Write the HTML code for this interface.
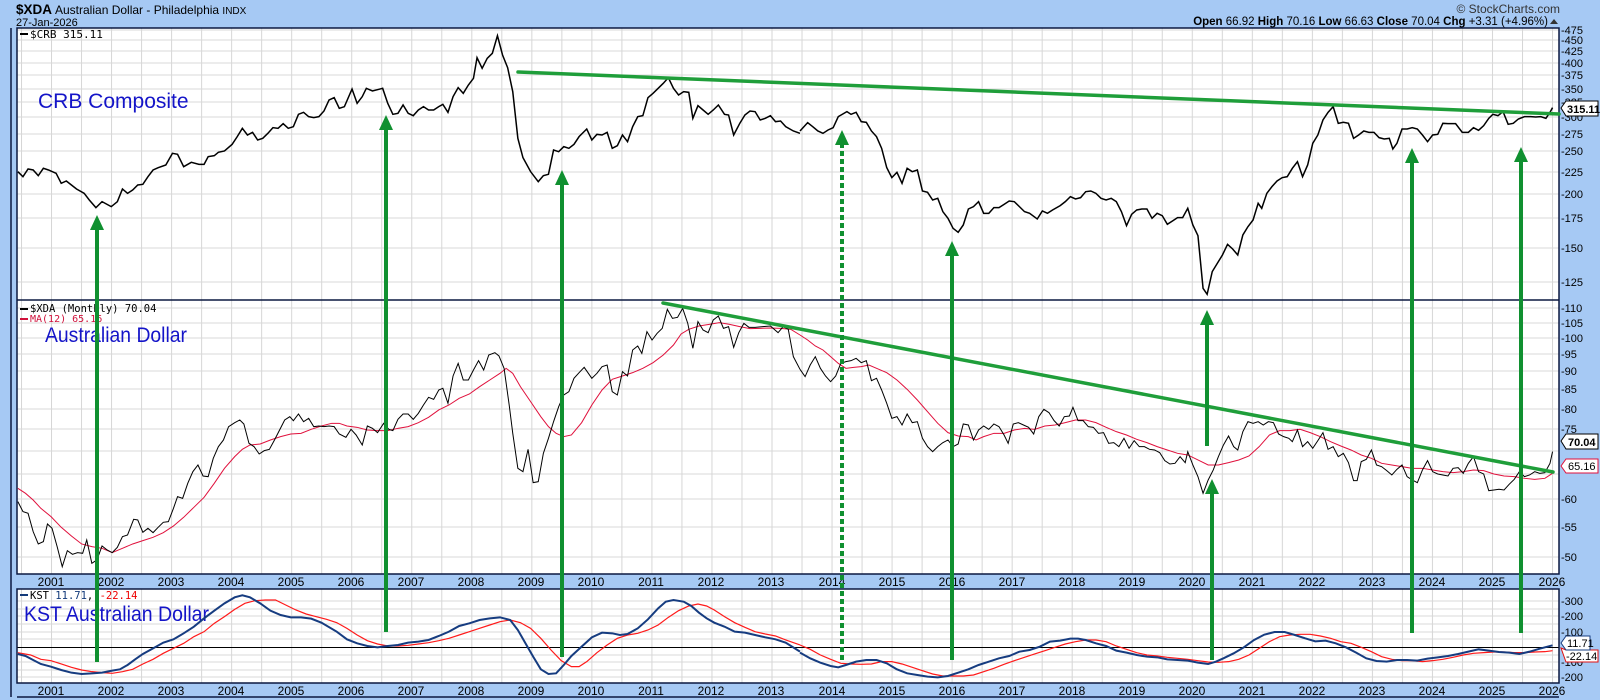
<!DOCTYPE html>
<html><head><meta charset="utf-8"><style>
html,body{margin:0;padding:0;background:#a6c9f4;}
svg{display:block;font-family:"Liberation Sans",Arial,sans-serif;}
</style></head><body>
<svg width="1600" height="700" viewBox="0 0 1600 700" xmlns="http://www.w3.org/2000/svg">
<rect width="1600" height="700" fill="#a6c9f4"/>
<text x="16" y="14" font-size="13.5" font-weight="bold" fill="#000">$XDA</text>
<text x="55" y="14" font-size="12" fill="#000">Australian Dollar - Philadelphia <tspan font-size="10">INDX</tspan></text>
<text x="16" y="26" font-size="11" fill="#000">27-Jan-2026</text>
<text x="1560" y="13" font-size="12" fill="#333" text-anchor="end">© StockCharts.com</text>
<text x="1548" y="25" font-size="11.5" fill="#000" text-anchor="end"><tspan font-weight="bold">Open</tspan> 66.92 <tspan font-weight="bold">High</tspan> 70.16 <tspan font-weight="bold">Low</tspan> 66.63 <tspan font-weight="bold">Close</tspan> 70.04 <tspan font-weight="bold">Chg</tspan> +3.31 (+4.96%)</text>
<path d="M1550 24 L1554 19 L1558 24 Z" fill="#333"/>

<rect x="17" y="28" width="1542" height="273" fill="#fff"/>
<rect x="17" y="301" width="1542" height="273" fill="#fff"/>
<rect x="17" y="589" width="1542" height="94" fill="#fff"/>

<defs>
<pattern id="vg" x="21" y="0" width="30.02" height="700" patternUnits="userSpaceOnUse">
<line x1="0.5" y1="0" x2="0.5" y2="700" stroke="#d6d6d6" stroke-width="1"/>
</pattern>
</defs>
<rect x="17" y="28" width="1542" height="273" fill="url(#vg)"/>
<rect x="17" y="301" width="1542" height="273" fill="url(#vg)"/>
<rect x="17" y="589" width="1542" height="94" fill="url(#vg)"/>

<g stroke="#d8d8d8" stroke-width="1">
<line x1="17" x2="1559" y1="30" y2="30"/><line x1="17" x2="1559" y1="40" y2="40"/><line x1="17" x2="1559" y1="51" y2="51"/><line x1="17" x2="1559" y1="63" y2="63"/><line x1="17" x2="1559" y1="75" y2="75"/><line x1="17" x2="1559" y1="89" y2="89"/><line x1="17" x2="1559" y1="102" y2="102"/><line x1="17" x2="1559" y1="117" y2="117"/><line x1="17" x2="1559" y1="134" y2="134"/><line x1="17" x2="1559" y1="151" y2="151"/><line x1="17" x2="1559" y1="172" y2="172"/><line x1="17" x2="1559" y1="194" y2="194"/><line x1="17" x2="1559" y1="218" y2="218"/><line x1="17" x2="1559" y1="248" y2="248"/><line x1="17" x2="1559" y1="282" y2="282"/>
<line x1="17" x2="1559" y1="308" y2="308"/><line x1="17" x2="1559" y1="323" y2="323"/><line x1="17" x2="1559" y1="338" y2="338"/><line x1="17" x2="1559" y1="354" y2="354"/><line x1="17" x2="1559" y1="371" y2="371"/><line x1="17" x2="1559" y1="389" y2="389"/><line x1="17" x2="1559" y1="409" y2="409"/><line x1="17" x2="1559" y1="429" y2="429"/><line x1="17" x2="1559" y1="451" y2="451"/><line x1="17" x2="1559" y1="474" y2="474"/><line x1="17" x2="1559" y1="499" y2="499"/><line x1="17" x2="1559" y1="527" y2="527"/><line x1="17" x2="1559" y1="557" y2="557"/>
<line x1="17" x2="1559" y1="601" y2="601"/><line x1="17" x2="1559" y1="609" y2="609"/><line x1="17" x2="1559" y1="616" y2="616"/><line x1="17" x2="1559" y1="624" y2="624"/><line x1="17" x2="1559" y1="632" y2="632"/><line x1="17" x2="1559" y1="639" y2="639"/><line x1="17" x2="1559" y1="655" y2="655"/><line x1="17" x2="1559" y1="662" y2="662"/><line x1="17" x2="1559" y1="670" y2="670"/><line x1="17" x2="1559" y1="677" y2="677"/>
</g>
<line x1="17" x2="1559" y1="647.5" y2="647.5" stroke="#000" stroke-width="1"/>

<g fill="none" stroke="#0b1840" stroke-width="1.5">
<rect x="17" y="28" width="1542" height="546"/>
<line x1="17" x2="1559" y1="300" y2="300"/>
<rect x="17" y="589" width="1542" height="94"/>
<line x1="17" x2="1559" y1="697" y2="697"/>
<line x1="11" x2="11" y1="28" y2="697"/>
</g>

<g font-size="12" fill="#000" text-anchor="middle">
<text x="51" y="586">2001</text><text x="111" y="586">2002</text><text x="171" y="586">2003</text><text x="231" y="586">2004</text><text x="291" y="586">2005</text><text x="351" y="586">2006</text><text x="411" y="586">2007</text><text x="471" y="586">2008</text><text x="531" y="586">2009</text><text x="591" y="586">2010</text><text x="651" y="586">2011</text><text x="711" y="586">2012</text><text x="771" y="586">2013</text><text x="832" y="586">2014</text><text x="892" y="586">2015</text><text x="952" y="586">2016</text><text x="1012" y="586">2017</text><text x="1072" y="586">2018</text><text x="1132" y="586">2019</text><text x="1192" y="586">2020</text><text x="1252" y="586">2021</text><text x="1312" y="586">2022</text><text x="1372" y="586">2023</text><text x="1432" y="586">2024</text><text x="1492" y="586">2025</text><text x="1552" y="586">2026</text>
</g>
<g font-size="12" fill="#000" text-anchor="middle">
<text x="51" y="695">2001</text><text x="111" y="695">2002</text><text x="171" y="695">2003</text><text x="231" y="695">2004</text><text x="291" y="695">2005</text><text x="351" y="695">2006</text><text x="411" y="695">2007</text><text x="471" y="695">2008</text><text x="531" y="695">2009</text><text x="591" y="695">2010</text><text x="651" y="695">2011</text><text x="711" y="695">2012</text><text x="771" y="695">2013</text><text x="832" y="695">2014</text><text x="892" y="695">2015</text><text x="952" y="695">2016</text><text x="1012" y="695">2017</text><text x="1072" y="695">2018</text><text x="1132" y="695">2019</text><text x="1192" y="695">2020</text><text x="1252" y="695">2021</text><text x="1312" y="695">2022</text><text x="1372" y="695">2023</text><text x="1432" y="695">2024</text><text x="1492" y="695">2025</text><text x="1552" y="695">2026</text>
</g>

<g font-size="11" fill="#000">
<text x="1561" y="34">-475</text><text x="1561" y="44">-450</text><text x="1561" y="55">-425</text><text x="1561" y="67">-400</text><text x="1561" y="79">-375</text><text x="1561" y="93">-350</text><text x="1561" y="106">-325</text><text x="1561" y="121">-300</text><text x="1561" y="138">-275</text><text x="1561" y="155">-250</text><text x="1561" y="176">-225</text><text x="1561" y="198">-200</text><text x="1561" y="222">-175</text><text x="1561" y="252">-150</text><text x="1561" y="286">-125</text>
<text x="1561" y="312">-110</text><text x="1561" y="327">-105</text><text x="1561" y="342">-100</text><text x="1561" y="358">-95</text><text x="1561" y="375">-90</text><text x="1561" y="393">-85</text><text x="1561" y="413">-80</text><text x="1561" y="433">-75</text><text x="1561" y="503">-60</text><text x="1561" y="531">-55</text><text x="1561" y="561">-50</text>
<text x="1561" y="605">-300</text><text x="1561" y="620">-200</text><text x="1561" y="636">-100</text><text x="1561" y="666">-100</text><text x="1561" y="681">-200</text>
</g>

<g font-family="'DejaVu Sans Mono','Liberation Mono',monospace" font-size="11">
<rect x="20" y="33" width="8" height="2" fill="#000"/><text x="30" y="38" fill="#000">$CRB 315.11</text>
<rect x="20" y="308" width="8" height="2" fill="#000"/><text x="30" y="312" fill="#000" font-size="10.5">$XDA (Monthly) 70.04</text>
<rect x="20" y="318" width="8" height="2" fill="#d0103a"/><text x="30" y="322" fill="#d0103a" font-size="10">MA(12) 65.16</text>
<rect x="20" y="594" width="8" height="2" fill="#123a7a"/><text x="30" y="599" fill="#000" font-size="10.5">KST <tspan fill="#123a7a">11.71</tspan>, <tspan fill="#e00">-22.14</tspan></text>
</g>
<g font-size="21" fill="#1414c8">
<text x="38" y="108">CRB Composite</text>
<text x="45" y="342" textLength="142" lengthAdjust="spacingAndGlyphs">Australian Dollar</text>
<text x="24" y="621" textLength="185" lengthAdjust="spacingAndGlyphs">KST Australian Dollar</text>
</g>

<g transform="translate(0,25) scale(0.5102,0.3333)">
<polyline vector-effect="non-scaling-stroke" fill="none" stroke="#000" stroke-width="1.5" points="35,440 45,455 55,432 65,435 75,452 85,430 95,435 110,445 120,475 130,468 140,480 150,492 165,505 175,525 188,548 200,530 218,545 230,530 240,492 250,505 260,495 270,480 280,478 290,455 300,435 310,428 325,420 338,385 348,388 360,425 375,412 390,418 400,418 408,395 420,392 428,382 440,378 455,358 465,335 475,310 485,330 495,322 505,345 515,340 525,325 535,308 545,310 555,296 565,310 575,305 585,268 595,262 605,275 615,278 625,275 635,258 645,225 655,218 665,250 675,245 690,192 700,235 710,215 718,190 730,198 750,190 760,235 770,268 780,265 790,240 800,265 810,272 820,255 830,245 840,255 850,255 860,245 868,238 878,262 888,215 898,188 908,205 918,180 928,160 935,98 945,130 955,100 965,85 975,32 985,90 995,128 1005,200 1015,340 1025,398 1040,440 1055,470 1065,452 1075,448 1085,375 1095,380 1105,365 1115,370 1125,358 1135,335 1150,312 1160,345 1170,328 1180,330 1190,322 1200,370 1210,362 1220,330 1230,350 1240,305 1250,275 1260,272 1270,218 1280,205 1290,190 1300,175 1310,158 1320,190 1330,210 1340,200 1350,202 1358,280 1368,242 1378,255 1388,268 1398,255 1408,240 1420,268 1428,270 1438,330 1450,295 1460,270 1470,258 1480,260 1490,285 1500,280 1510,272 1520,290 1530,288 1540,305 1555,318 1568,325"/>
</g>
<g transform="translate(800,25) scale(0.5102,0.3333)">
<polyline vector-effect="non-scaling-stroke" fill="none" stroke="#000" stroke-width="1.5" points="0,318 15,293 25,305 35,318 45,325 55,315 65,308 75,275 92,260 100,268 110,262 120,290 130,292 140,318 150,335 160,370 170,428 180,458 190,442 200,475 210,430 220,440 230,435 240,498 250,502 260,525 270,520 280,560 290,580 300,610 310,622 320,600 330,552 340,545 350,530 360,565 370,565 380,548 390,548 400,538 410,528 420,530 430,545 440,560 450,565 465,582 475,558 485,565 495,555 510,542 520,530 530,515 540,522 550,518 560,500 570,498 580,505 590,520 600,525 610,520 620,530 630,560 640,602 650,568 660,555 670,552 680,552 690,580 700,565 710,572 720,598 730,588 740,578 750,578 760,550 770,600 780,632 790,790 798,808 808,740 820,710 828,690 838,658 848,672 858,690 868,630 878,605 888,585 898,535 905,550 915,505 925,485 935,468 945,458 955,455 965,430 975,410 985,455 995,420 1005,355 1015,330 1025,285 1035,262 1045,245 1055,295 1065,292 1075,295 1085,340 1095,330 1105,318 1115,322 1125,322 1135,338 1145,342 1155,340 1162,372 1170,355 1180,312 1190,312 1200,308 1210,312 1220,330 1230,350 1240,330 1250,328 1260,295 1270,296 1285,296 1298,322 1310,322 1320,308 1330,316 1340,302 1350,280 1358,268 1368,272 1378,260 1388,298 1398,295 1408,282 1420,275 1432,275 1442,276 1452,275 1462,280 1470,262 1475,248"/>
</g>

<g transform="translate(0,290) scale(0.5102,0.3333)">
<polyline vector-effect="non-scaling-stroke" fill="none" stroke="#e0103c" stroke-width="1" points="35,595 50,610 65,630 80,655 100,680 120,712 140,738 160,762 180,770 200,775 220,788 240,775 260,762 280,752 300,742 320,728 340,708 360,682 380,652 400,622 420,580 440,535 460,500 475,478 490,465 510,462 530,450 550,440 570,432 590,430 610,418 630,408 650,400 665,400 680,408 700,412 720,420 740,422 760,422 780,415 800,410 820,398 840,382 860,360 880,345 900,325 920,312 940,290 960,270 980,250 992,235 1005,250 1020,290 1040,335 1060,380 1075,410 1090,430 1105,440 1120,435 1140,398 1160,345 1180,300 1200,268 1220,258 1240,248 1260,235 1280,218 1300,195 1320,165 1335,132 1350,118 1370,108 1390,103 1410,98 1430,103 1450,110 1470,116 1490,115 1510,114 1530,115 1550,118 1568,135"/>
<polyline vector-effect="non-scaling-stroke" fill="none" stroke="#000" stroke-width="1" points="35,635 45,665 55,670 65,725 75,762 85,755 93,702 102,715 112,770 122,830 132,782 142,793 152,788 162,790 170,750 180,820 190,810 200,768 210,780 220,788 230,772 240,740 250,735 262,688 270,690 280,727 290,715 300,728 310,712 320,697 330,695 340,655 348,620 358,625 368,580 378,545 388,525 398,558 408,560 418,505 428,470 438,450 448,410 460,398 470,390 478,402 488,460 498,470 508,492 518,482 528,478 538,450 548,420 558,390 568,380 575,392 585,372 595,395 605,385 615,410 625,408 635,410 645,408 655,410 665,432 678,442 688,418 698,435 710,465 720,408 730,415 740,428 752,400 762,418 770,422 780,388 790,372 800,372 810,388 820,370 830,345 840,322 850,328 860,300 868,295 878,340 888,258 898,220 908,270 918,270 928,240 938,212 948,240 958,195 970,188 978,198 988,235 998,345 1005,430 1015,535 1025,545 1035,478 1045,578 1055,575 1065,490 1075,445 1085,395 1095,350 1105,315 1115,305 1125,265 1135,248 1145,232 1160,265 1170,250 1180,230 1190,225 1200,305 1210,315 1220,245 1230,258 1240,180 1250,168 1258,190 1268,125 1278,150 1288,130 1298,115 1308,58 1318,85 1328,82 1338,55 1348,100 1358,175 1368,95 1378,120 1388,128 1398,90 1408,78 1418,115 1428,110 1438,172 1448,128 1458,100 1468,112 1480,112 1495,110 1510,108 1525,128 1535,110 1545,118 1555,200 1568,238"/>
</g>
<g transform="translate(800,290) scale(0.5102,0.3333)">
<polyline vector-effect="non-scaling-stroke" fill="none" stroke="#e0103c" stroke-width="1" points="0,135 15,150 30,168 45,180 60,200 75,220 90,235 105,232 120,230 135,225 150,235 170,248 190,270 210,298 230,330 250,365 270,400 290,428 310,438 330,440 345,450 360,440 380,430 400,430 420,420 440,415 460,418 480,408 500,405 520,398 540,390 560,390 580,398 600,412 620,425 640,435 660,448 680,458 700,470 720,480 740,490 760,495 780,510 800,525 820,525 840,518 860,510 880,498 900,470 920,435 940,422 960,422 980,418 1000,428 1020,440 1040,455 1060,468 1080,480 1100,495 1120,505 1140,520 1160,525 1180,530 1200,535 1220,535 1240,540 1260,545 1280,548 1300,545 1320,540 1340,542 1360,552 1380,558 1400,560 1420,565 1440,568 1460,565 1475,550"/>
<polyline vector-effect="non-scaling-stroke" fill="none" stroke="#000" stroke-width="1" points="0,238 10,260 20,225 30,200 40,235 50,258 60,275 70,258 80,220 90,215 100,212 110,205 120,218 130,212 140,272 150,265 160,300 170,340 180,385 190,380 200,405 210,372 220,398 230,395 240,445 250,470 260,485 270,470 280,458 290,450 300,470 310,462 320,402 330,405 340,450 350,420 360,408 370,418 380,402 390,410 400,435 408,460 418,402 428,398 438,405 448,412 458,432 468,380 478,358 488,368 498,392 508,408 518,380 528,378 535,352 545,392 555,392 565,410 575,412 585,430 595,428 605,460 615,458 625,470 635,445 645,475 655,452 665,470 675,470 685,478 695,480 705,488 715,512 725,522 735,520 745,500 755,518 760,485 770,525 780,560 790,610 800,570 810,540 820,500 830,465 840,438 850,470 858,480 868,425 878,395 888,400 898,395 908,405 918,395 928,398 938,432 948,440 958,445 965,455 975,420 985,470 995,455 1005,475 1015,452 1025,428 1035,478 1045,470 1055,500 1065,490 1075,518 1085,572 1092,572 1100,515 1110,508 1120,480 1130,525 1140,530 1150,542 1160,555 1170,538 1180,525 1190,560 1200,570 1210,578 1220,540 1230,512 1240,545 1250,552 1260,555 1270,558 1280,535 1290,533 1300,550 1310,520 1320,500 1330,545 1340,552 1350,602 1360,600 1370,598 1380,600 1390,583 1400,568 1410,545 1420,560 1430,555 1440,545 1450,550 1460,548 1470,520 1475,485"/>
</g>

<g transform="translate(0,570) scale(0.5102,0.3333)">
<polyline vector-effect="non-scaling-stroke" fill="none" stroke="#ff1a1a" stroke-width="1.2" points="35,248 60,255 80,268 100,272 120,282 140,292 160,300 180,305 200,308 220,310 240,305 260,298 280,282 300,268 320,250 340,235 360,220 380,200 400,185 420,160 440,140 460,118 480,100 500,92 520,90 540,90 560,105 580,120 600,132 620,140 640,148 660,158 680,175 700,195 720,212 740,222 760,228 780,228 800,226 820,222 840,218 860,212 880,205 900,195 920,185 940,175 960,165 980,155 1000,150 1020,158 1040,175 1060,205 1080,240 1100,272 1120,290 1135,290 1150,275 1170,248 1190,225 1210,205 1230,195 1250,190 1270,180 1290,165 1310,142 1330,122 1350,108 1368,102 1385,108 1400,120 1420,140 1440,158 1460,172 1480,185 1500,192 1520,198 1540,210 1568,225"/>
<polyline vector-effect="non-scaling-stroke" fill="none" stroke="#163c80" stroke-width="2" points="35,252 50,258 65,270 80,282 100,290 120,300 140,308 160,312 180,310 200,308 220,302 235,298 250,285 265,268 280,252 300,235 320,218 340,208 360,190 380,170 400,145 420,122 440,100 460,82 475,76 490,82 510,100 530,122 550,135 570,142 590,142 610,146 630,158 660,185 680,208 700,220 720,228 740,232 760,228 780,225 800,218 820,215 840,210 860,198 880,185 900,168 920,160 940,150 960,145 980,142 1000,150 1015,180 1030,220 1045,260 1060,298 1075,312 1090,310 1105,285 1120,258 1140,230 1160,202 1180,188 1200,190 1215,195 1230,192 1250,175 1270,148 1290,115 1305,95 1320,90 1340,95 1355,108 1370,128 1385,145 1400,158 1420,170 1440,185 1460,188 1480,195 1500,202 1520,208 1540,218 1568,245"/>
</g>
<g transform="translate(800,570) scale(0.5102,0.3333)">
<polyline vector-effect="non-scaling-stroke" fill="none" stroke="#ff1a1a" stroke-width="1.2" points="0,225 20,238 40,255 60,268 80,280 100,282 120,283 140,282 160,275 180,275 200,282 220,292 240,302 260,312 280,318 300,318 320,318 340,315 360,305 380,295 400,283 420,272 440,262 460,252 480,242 500,232 520,222 540,215 560,210 580,210 600,215 620,228 640,238 660,248 680,255 700,258 720,262 740,265 760,268 780,272 800,276 820,277 840,275 860,268 880,255 900,235 920,215 940,200 960,195 980,193 1000,193 1020,198 1040,205 1060,215 1080,220 1100,232 1120,245 1140,260 1160,268 1180,272 1200,272 1220,275 1240,272 1260,268 1280,262 1300,255 1320,250 1340,248 1360,246 1380,246 1400,248 1420,248 1440,246 1460,245 1475,242"/>
<polyline vector-effect="non-scaling-stroke" fill="none" stroke="#163c80" stroke-width="2" points="0,248 20,265 40,278 60,288 75,292 90,285 110,275 130,270 150,270 170,280 190,298 210,310 230,315 250,320 270,322 290,318 310,308 330,298 350,285 370,275 390,265 410,258 430,245 450,240 470,230 490,215 510,212 530,206 545,206 560,210 580,220 600,228 620,242 640,248 660,255 680,260 700,262 720,268 740,270 760,272 780,278 800,282 815,275 830,265 850,250 870,232 890,210 910,194 930,186 950,186 970,195 990,205 1010,214 1030,212 1050,220 1070,232 1090,248 1110,265 1130,273 1150,275 1170,270 1190,270 1210,272 1230,266 1250,262 1270,258 1290,252 1310,245 1330,238 1350,242 1370,246 1390,248 1410,252 1430,245 1450,236 1475,226"/>
</g>

<g stroke="#1f9e3a" stroke-width="3.5" stroke-linecap="round">
<line x1="518" y1="72" x2="1559" y2="114"/>
<line x1="663" y1="303" x2="1553" y2="472"/>
</g>

<g stroke="#109030" stroke-width="4" fill="#109030">
<line x1="97" y1="228" x2="97" y2="662"/><path d="M90 230 L97 215 L104 230 Z" stroke="none"/>
<line x1="386" y1="128" x2="386" y2="632"/><path d="M379 130 L386 115 L393 130 Z" stroke="none"/>
<line x1="562" y1="183" x2="562" y2="657"/><path d="M555 185 L562 170 L569 185 Z" stroke="none"/>
<line x1="842" y1="143" x2="842" y2="660" stroke-dasharray="5,3"/><path d="M835 145 L842 130 L849 145 Z" stroke="none"/>
<line x1="952" y1="254" x2="952" y2="660"/><path d="M945 256 L952 241 L959 256 Z" stroke="none"/>
<line x1="1207" y1="323" x2="1207" y2="446"/><path d="M1200 325 L1207 310 L1214 325 Z" stroke="none"/>
<line x1="1212" y1="492" x2="1212" y2="660"/><path d="M1205 494 L1212 479 L1219 494 Z" stroke="none"/>
<line x1="1412" y1="161" x2="1412" y2="633"/><path d="M1405 163 L1412 148 L1419 163 Z" stroke="none"/>
<line x1="1521" y1="160" x2="1521" y2="633"/><path d="M1514 162 L1521 147 L1528 162 Z" stroke="none"/>
</g>

<g font-size="11" font-weight="bold">
<path d="M1561 108 L1566 101 L1598 101 L1598 116 L1566 116 Z" fill="#fff" stroke="#000"/>
<text x="1567" y="113" fill="#000">315.11</text>
<path d="M1561 441 L1566 434 L1598 434 L1598 449 L1566 449 Z" fill="#fff" stroke="#000"/>
<text x="1568" y="446" fill="#000">70.04</text>
<path d="M1561 466 L1566 459 L1598 459 L1598 473 L1566 473 Z" fill="#fff" stroke="#e0103c"/>
<text x="1568" y="470" fill="#000" font-weight="normal">65.16</text>
<path d="M1561 648 L1566 650 L1598 650 L1598 662 L1566 662 Z" fill="#fff" stroke="#e01010"/>
<text x="1566" y="660" fill="#000" font-weight="normal">-22.14</text>
<path d="M1561 643 L1566 636 L1590 636 L1590 650 L1566 650 Z" fill="#fff" stroke="#163c80"/>
<text x="1567" y="647" fill="#000" font-weight="normal">11.71</text>
</g>
</svg>
</body></html>
